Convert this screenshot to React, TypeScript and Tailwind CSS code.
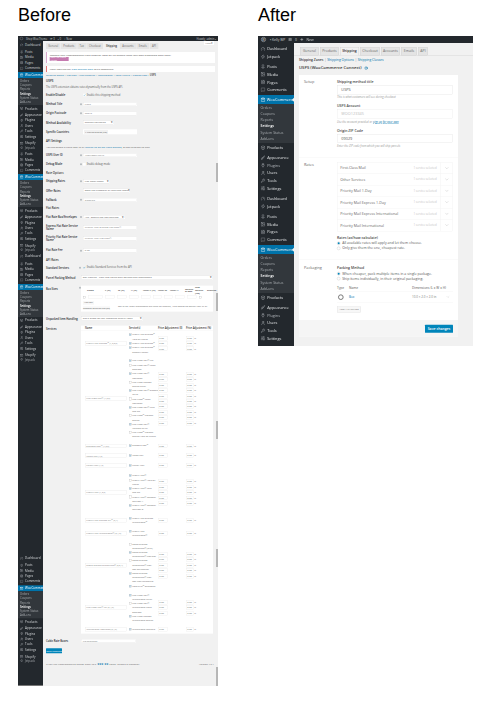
import type { ReactNode } from 'react'
import {
  Box,
  Brush,
  Check,
  ChevronDown,
  FileText,
  Gauge,
  HelpCircle,
  Image,
  MessageSquare,
  MessageSquareText,
  Pin,
  Plug,
  Plus,
  ShoppingBag,
  SlidersHorizontal,
  User,
  Wrench,
  Zap,
} from 'lucide-react'

type IconType = typeof Gauge

// both screenshots are drawn at 3x and scaled down, so small text keeps its real size
const subMenu = ['Orders', 'Coupons', 'Reports', 'Settings', 'System Status', 'Add-ons']

const topItems: [string, IconType][] = [
  ['Posts', Pin],
  ['Media', Image],
  ['Pages', FileText],
  ['Comments', MessageSquare],
]

const lowerItems: [string, IconType][] = [
  ['Appearance', Brush],
  ['Plugins', Plug],
  ['Users', User],
  ['Tools', Wrench],
  ['Settings', SlidersHorizontal],
]

function SmallItem({ label, icon: Icon }: { label: string; icon: IconType }) {
  return (
    <div className="flex h-[16.2px] items-center gap-[5px] pl-[6px] text-[9px] text-[#d5d8da]">
      <Icon size={10} strokeWidth={2.5} className="shrink-0 text-[#a0a5aa]" />
      <span>{label}</span>
    </div>
  )
}

function SmallGroup({ className }: { className?: string }) {
  return (
    <div className={className}>
      {topItems.map(([label, icon]) => (
        <SmallItem key={label} label={label} icon={icon} />
      ))}
      <div className="mt-[3.3px] flex h-[18px] items-center gap-[5px] bg-[#0073aa] pl-[6px] text-[9px] text-white">
        <ShoppingBag size={10} strokeWidth={2.5} className="shrink-0" />
        <span>WooCommerce</span>
      </div>
      <div className="h-[81px] bg-[#32373c] pt-[2.4px]">
        {subMenu.map((s) => (
          <div
            key={s}
            className={`h-[12.9px] pl-[6px] text-[8.4px] leading-[12.9px] ${s === 'Settings' ? 'font-semibold text-white' : 'text-[#a5a9ad]'}`}
          >
            {s}
          </div>
        ))}
      </div>
      <div className="mt-[2.4px]">
        <SmallItem label="Products" icon={Box} />
      </div>
      <div className="mt-[3.3px]">
        {lowerItems.map(([label, icon]) => (
          <SmallItem key={label} label={label} icon={icon} />
        ))}
      </div>
      <div className="mt-[6px] flex h-[12.6px] items-center gap-[5px] pl-[6px] text-[9px] text-[#d5d8da]">
        <ShoppingBag size={10} strokeWidth={2.5} className="shrink-0 text-[#a0a5aa]" />
        Shopify
      </div>
      <div className="flex h-[12.6px] items-center gap-[5px] pl-[6px] text-[9px] text-[#a5a9ad]">
        <Zap size={10} strokeWidth={2.5} className="shrink-0 text-[#a0a5aa]" />
        Jetpack
      </div>
    </div>
  )
}

function BeforeSidebar() {
  return (
    <div className="flex h-[1935px] w-[75px] shrink-0 flex-col border-b-[3px] border-[#777] bg-[#23282d] pt-[3.9px]">
      <SmallItem label="Dashboard" icon={Gauge} />
      <SmallGroup className="mt-[4.8px]" />
      <SmallGroup className="mt-[5.4px]" />
      <div className="mt-[5.4px]">
        <SmallItem label="Dashboard" icon={Gauge} />
      </div>
      <SmallGroup className="mt-[6.6px]" />
      <div className="mt-[582px]">
        <SmallItem label="Dashboard" icon={Gauge} />
      </div>
      <SmallGroup className="mt-[4.8px]" />
    </div>
  )
}

function FormRow({
  label,
  tip,
  className,
  children,
}: {
  label: string
  tip?: boolean
  className: string
  children?: ReactNode
}) {
  return (
    <div className={`flex items-center ${className}`}>
      <div className="w-[102px] shrink-0 pr-[4px] text-[8px] leading-[10.5px] font-semibold text-[#23282d]">{label}</div>
      <div className="flex w-[9px] shrink-0 justify-start">
        {tip && <div className="h-[6px] w-[6px] rounded-full bg-[#b4b9be]" />}
      </div>
      {children}
    </div>
  )
}

function Field({ value, className }: { value?: string; className: string }) {
  return (
    <div className={`flex h-[11px] items-center border border-[#e5e5e5] bg-white pl-[4.5px] text-[7.5px] text-[#777] ${className}`}>
      {value}
    </div>
  )
}

function Select({ value, className }: { value: string; className: string }) {
  return (
    <div className={`flex h-[12px] items-center justify-between border border-[#ddd] bg-white px-[4.5px] text-[7.5px] whitespace-nowrap text-[#555] ${className}`}>
      <span>{value}</span>
      <span className="text-[7.5px] text-[#333]">▾</span>
    </div>
  )
}

type Service = { lines: string[]; on?: boolean }
type ServiceGroup = { name: string; cls: string; services: Service[] }

const s2 = (a: string, b: string, on = true): Service => ({ lines: [a, b], on })
const s1 = (a: string, on = true): Service => ({ lines: [a], on })
const s3 = (a: string, b: string, c: string, on = true): Service => ({ lines: [a, b, c], on })

const groups: ServiceGroup[] = [
  {
    name: 'Priority Mail Express™ (1,2,3,5)',
    cls: 'py-[6.75px]',
    services: [
      s2('Priority Mail Express™', 'Hold for Pickup'),
      s1('Priority Mail Express™'),
      s2('Priority Mail Express™', 'Sunday/Holiday'),
    ],
  },
  {
    name: 'First-Class Mail® (1,2,5)',
    cls: 'py-[6.75px]',
    services: [
      s1('First-Class Mail® Flat'),
      s2('First-Class Mail® Large', 'Envelope', false),
      s2('First-Class Mail®', 'Postcards'),
      s2('First-Class Package', 'Service Retail', false),
      s2('First-Class Mail® Stamped', 'Letter'),
      s2('First-Class™ Large', 'Postcards', false),
      s2('First-Class Mail® Keys', 'and IDs'),
      s2('First-Class™ Package', 'Service', false),
      s2('First-Class Mail®', 'Metered Letter'),
      s2('First-Class™ Package', 'Service Hold for Pickup', false),
    ],
  },
  { name: 'Standard Post™ (1,2,5)', cls: 'py-[7.8px]', services: [s1('Standard Post™')] },
  { name: 'Media Mail (1,5)', cls: 'py-[7.8px]', services: [s1('Media Mail')] },
  { name: 'Library Mail (1,5)', cls: 'py-[7.8px]', services: [s1('Library Mail')] },
  {
    name: 'Priority Mail (1,2,5)',
    cls: 'pt-[9px] pb-[6.75px]',
    services: [
      s1('Priority Mail®'),
      s2('Priority Mail® Hold for', 'Pickup', false),
      s2('Priority Mail® Keys', 'and IDs'),
      s2('Priority Mail® Regional', 'Rate Box A', false),
      s2('Priority Mail® Regional', 'Rate Box B'),
    ],
  },
  {
    name: 'Priority Mail Express Intl™ (2,4)',
    cls: 'py-[6.75px]',
    services: [s2('Priority Mail Express', 'International™')],
  },
  {
    name: 'Priority Mail International® (2,4,5)',
    cls: 'py-[6.75px]',
    services: [s2('Priority Mail', 'International®')],
  },
  {
    name: 'Global Express Guaranteed® (2,3,4)',
    cls: 'py-[6.75px]',
    services: [
      s2('Global Express', 'Guaranteed® (GXG)', false),
      s2('Global Express', 'Guaranteed® Non-Doc'),
      s3('Global Express', 'Guaranteed® Non-', 'Doc Rectangular', false),
      s3('Global Express', 'Guaranteed® Non-', 'Doc Non-rectangular'),
      s1('USPS GXG™ Envelopes'),
    ],
  },
  {
    name: 'First Class Mail® Intl (2,4,5)',
    cls: 'py-[6.75px]',
    services: [
      s2('First-Class Mail®', 'International Letter'),
      s3('First-Class Mail®', 'International Large', 'Envelope', false),
      s2('First-Class Package', 'International Service'),
    ],
  },
  {
    name: 'International Postcards (2,4,5)',
    cls: 'py-[6.75px]',
    services: [s1('International Postcard')],
  },
]

function MiniInput({ suffix }: { suffix?: boolean }) {
  return (
    <div className="flex h-[13.5px] items-center gap-[2.4px]">
      <div className={`flex h-[12.6px] items-center border border-[#e8e8e8] bg-white pl-[3px] text-[7px] text-[#777] ${suffix ? 'w-[22px]' : 'w-[29px]'}`}>
        0.00
      </div>
      {suffix && <span className="text-[7px] text-[#555]">%</span>}
    </div>
  )
}

function ServicesTable() {
  return (
    <div className="w-[396px] bg-white">
      <div className="grid h-[15px] grid-cols-[144px_87px_84px_81px] items-center border-b border-[#eee] text-[7.5px] font-semibold whitespace-nowrap text-[#333]">
        <span className="pl-[12px]">Name</span>
        <span>Service(s)</span>
        <span>Price Adjustment ($)</span>
        <span>Price Adjustment (%)</span>
      </div>
      {groups.map((g) => (
        <div key={g.name} className={`grid grid-cols-[144px_87px_84px_81px] items-center ${g.cls}`}>
          <div className="pl-[12px]">
            <div className="flex h-[12px] w-[126px] items-center border border-[#e5e5e5] pl-[3px] text-[6.6px] whitespace-nowrap text-[#777]">
              {g.name}
            </div>
          </div>
          <div>
            {g.services.map((s) => (
              <div key={s.lines.join()} className="flex min-h-[13.8px] gap-[2.4px] text-[6.6px] leading-[12.6px] text-[#666]">
                <div className={`mt-[2.7px] flex h-[7.2px] w-[7.2px] shrink-0 items-center justify-center border border-[#bbb] ${s.on ? 'bg-[#d6e8f5]' : 'bg-white'}`}>
                  {s.on && <Check size={6.6} strokeWidth={4} className="text-[#1e8cbe]" />}
                </div>
                <div className="whitespace-nowrap">
                  {s.lines.map((l) => (
                    <div key={l}>{l}</div>
                  ))}
                </div>
              </div>
            ))}
          </div>
          <div className="flex flex-col gap-[2.7px]">
            {g.services.map((s) => (
              <MiniInput key={s.lines.join()} />
            ))}
          </div>
          <div className="flex flex-col gap-[2.7px]">
            {g.services.map((s) => (
              <MiniInput key={s.lines.join()} suffix />
            ))}
          </div>
        </div>
      ))}
    </div>
  )
}

function BoxTable() {
  const cols: [string, string][] = [
    ['Name', 'w-[54px]'],
    ['L (in)', 'w-[39px]'],
    ['W (in)', 'w-[39px]'],
    ['H (in)', 'w-[36px]'],
    ['Inner L (in)', 'w-[45px]'],
    ['Inner W', 'w-[36px]'],
    ['Inner H', 'w-[45px]'],
    ['Weight of Box', 'w-[30px]'],
    ['Max Weight (lbs)', 'w-[36px]'],
    ['Enabled', 'w-[30px]'],
  ]
  return (
    <div className="h-[78px] w-[396px] bg-white">
      <div className="flex h-[27px] items-center pl-[18px] text-[7.2px] leading-[8.5px] font-semibold text-[#444]">
        {cols.map(([c, w]) => (
          <div key={c} className={`shrink-0 pr-[2px] ${w}`}>
            {c}
          </div>
        ))}
      </div>
      <div className="flex h-[15px] items-center gap-[9px] pl-[6px]">
        <div className="h-[7.2px] w-[7.2px] border border-[#bbb]" />
        <div className="h-[11px] w-[42px] border border-[#e8e8e8]" />
        <div className="h-[11px] w-[27px] border border-[#e8e8e8]" />
        <div className="h-[11px] w-[27px] border border-[#e8e8e8]" />
        <div className="h-[11px] w-[27px] border border-[#e8e8e8]" />
        <div className="h-[11px] w-[27px] border border-[#e8e8e8]" />
        <div className="h-[11px] w-[24px] border border-[#e8e8e8]" />
        <div className="h-[11px] w-[24px] border border-[#e8e8e8]" />
        <div className="h-[11px] w-[27px] border border-[#e8e8e8]" />
        <div className="h-[11px] w-[27px] border border-[#e8e8e8]" />
        <div className="h-[7.2px] w-[7.2px] border border-[#bbb]" />
      </div>
      <div className="mt-[4.5px] flex gap-[24px] pl-[6px]">
        <div className="flex flex-col gap-[4.5px]">
          <div className="flex h-[11px] w-[33px] items-center justify-center bg-[#f7f7f7] text-[7px] text-[#555]">Add box</div>
          <div className="flex h-[11px] w-[81px] items-center justify-center bg-[#f7f7f7] text-[7px] whitespace-nowrap text-[#555]">Remove selected box(es)</div>
        </div>
        <div className="mt-[11px] text-[7px] whitespace-nowrap text-[#666]">
          Box sizes: inner dimensions are used for packing, zero means no weight limit at all.
        </div>
      </div>
    </div>
  )
}

function BeforeMain() {
  const tabs = ['General', 'Products', 'Tax', 'Checkout', 'Shipping', 'Accounts', 'Emails', 'API']
  return (
    <div className="relative w-[525px] bg-[#f1f1f1] pl-[9px]">
      <div className="absolute top-0 right-[12px] flex h-[12px] w-[30px] items-center justify-center bg-white text-[7.5px] text-[#666]">Help ▾</div>
      <div className="flex h-[30px] items-center gap-[1.5px] pr-[9px]">
        {tabs.map((t) => (
          <div
            key={t}
            className={`flex h-[18px] items-center px-[7px] text-[8px] ${t === 'Shipping' ? 'bg-[#f1f1f1] font-semibold text-[#333]' : 'bg-[#e4e4e4] text-[#666]'}`}
          >
            {t}
          </div>
        ))}
      </div>
      <div className="mt-[3px] mr-[9px] h-[33px] border-l-2 border-[#c77fb5] bg-white pt-[3px] pl-[9px] text-[7.5px] text-[#444]">
        <div className="h-[12px] whitespace-nowrap">Connect your WooCommerce USPS account: rates will be fetched using your own credentials once ready.</div>
        <div className="flex h-[12px] w-[57px] items-center justify-center bg-[#c57ab0] text-[7px] text-white">Apply for USPS Access</div>
      </div>
      <div className="mt-[9px] mr-[9px] flex h-[18px] items-center border-l-2 border-[#dc3232] bg-white pl-[9px] text-[7.5px] text-[#444]">
        USPS requires the <span className="mx-[3px] text-[#0073aa]">Rate Settings page</span> to be configured.
      </div>
      <div className="mt-[3px] flex h-[12px] items-center gap-[2px] text-[7.5px] whitespace-nowrap text-[#0073aa]">
        Shipping Zones | Flat Rate | Free Shipping | International | Local Pickup | Canada Post |
        <b className="font-semibold text-[#333]">USPS</b>
      </div>
      <div className="mt-[4.5px] flex h-[15px] items-center text-[9px] font-semibold text-[#23282d]">USPS</div>
      <div className="mt-[4.5px] h-[12px] text-[7.6px] leading-[12px] whitespace-nowrap text-[#555]">
        The USPS extension obtains rates dynamically from the USPS API.
      </div>
      <div className="mt-[4.5px]">
        <FormRow label="Enable/Disable" className="h-[27.6px]">
          <div className="flex items-center gap-[3px] text-[7.6px] text-[#555]">
            <div className="flex h-[8px] w-[8px] items-center justify-center bg-white">
              <Check size={7} strokeWidth={4} className="text-[#1e8cbe]" />
            </div>
            Enable this shipping method
          </div>
        </FormRow>
        <FormRow label="Method Title" tip className="h-[27.6px]"><Field value="USPS" className="w-[162px]" /></FormRow>
        <FormRow label="Origin Postcode" tip className="h-[27.6px]"><Field value="90210" className="w-[162px]" /></FormRow>
        <FormRow label="Method Availability" className="h-[27.6px]"><Select value="Specific Countries" className="w-[93px]" /></FormRow>
        <FormRow label="Specific Countries" className="h-[27.6px]">
          <div className="flex h-[15px] w-[162px] items-center bg-white pl-[3px]">
            <div className="bg-[#f1f1f1] px-[3px] text-[7.2px] text-[#555]">× United States (US)</div>
          </div>
        </FormRow>
      </div>
      <div className="mt-[6.3px] flex h-[18px] items-center text-[8.4px] font-semibold text-[#23282d]">API Settings</div>
      <div className="h-[12px] text-[7.5px] leading-[12px] whitespace-nowrap text-[#555]">
        You can obtain a USPS user ID by <span className="text-[#0073aa]">signing up on the USPS website</span>, or ask us to set up free.
      </div>
      <div className="mt-[6px]">
        <FormRow label="USPS User ID" tip className="h-[27.6px]"><Field value="150WOOTH5516" className="w-[162px]" /></FormRow>
        <FormRow label="Debug Mode" tip className="h-[27.6px]">
          <div className="flex items-center gap-[3px] text-[7.6px] text-[#555]">
            <div className="h-[8px] w-[8px] bg-white" />
            Enable debug mode
          </div>
        </FormRow>
      </div>
      <div className="flex h-[24px] items-center text-[8.4px] font-semibold text-[#333]">Rate Options</div>
      <FormRow label="Shipping Rates" tip className="h-[27px]"><Select value="Use Retail Rates" className="w-[81px]" /></FormRow>
      <FormRow label="Offer Rates" className="h-[27.6px]"><Select value="Offer the customer all returned rates" className="w-[141px]" /></FormRow>
      <FormRow label="Fallback" tip className="h-[27.6px]"><Field value="Disabled" className="w-[162px]" /></FormRow>
      <div className="flex h-[24px] items-center text-[8.4px] font-semibold text-[#333]">Flat Rates</div>
      <FormRow label="Flat Rate Box/Envelopes" tip className="h-[27.6px]"><Select value="Yes - Enable flat rate services" className="w-[126px]" /></FormRow>
      <FormRow label="Express Flat Rate Service Name" className="h-[36px]"><Field value="Priority Mail Express Flat Rate®" className="w-[162px]" /></FormRow>
      <FormRow label="Priority Flat Rate Service Name" className="h-[30px]"><Field value="Priority Mail Flat Rate®" className="w-[162px]" /></FormRow>
      <FormRow label="Flat Rate Fee" tip className="h-[42px]"><Field value="0.00" className="w-[162px]" /></FormRow>
      <div className="flex h-[15px] items-center text-[8.4px] font-semibold text-[#333]">API Rates</div>
      <div className="flex h-[30px] items-center">
        <div className="w-[99px] shrink-0 text-[8px] font-semibold text-[#23282d]">Standard Services</div>
        <div className="h-[6px] w-[6px] rounded-full bg-[#b4b9be]" />
        <div className="ml-[6px] flex items-center gap-[3px] text-[7.6px] text-[#555]">
          <Check size={8} strokeWidth={4} className="text-[#1e8cbe]" />
          Enable Standard Services from the API
        </div>
      </div>
      <div className="flex h-[30px] items-center">
        <div className="w-[105px] shrink-0 text-[8px] font-semibold text-[#23282d]">Parcel Packing Method</div>
        <Select value="Box Packing - Pack into boxes with weights and dimensions" className="w-[396px]" />
      </div>
      <div className="mt-[9px] flex">
        <div className="w-[99px] shrink-0 pt-[3px] text-[8px] font-semibold text-[#23282d]">Box Sizes</div>
        <div className="mt-[3px] h-[6px] w-[6px] rounded-full bg-[#b4b9be]" />
        <BoxTable />
      </div>
      <div className="mt-[6px] flex h-[30px] items-center">
        <div className="w-[105px] shrink-0 text-[8px] font-semibold text-[#23282d]">Unpacked Item Handling</div>
        <Select value="Get a quote for the unpacked item by itself" className="w-[186px]" />
      </div>
      <div className="mt-[6px] flex">
        <div className="w-[105px] shrink-0 pt-[3px] text-[8px] font-semibold text-[#23282d]">Services</div>
        <ServicesTable />
      </div>
      <div className="mt-[6px] flex h-[30px] items-center">
        <div className="w-[105px] shrink-0 text-[8px] font-semibold text-[#23282d]">Cubic Rate Boxes</div>
        <Field value="No selection" className="w-[165px]" />
      </div>
      <div className="mt-[7.5px] flex h-[15px] w-[48px] items-center justify-center rounded-[1.5px] bg-[#0085ba] text-[7.5px] text-white">
        Save changes
      </div>
      <div className="mt-[27px] flex h-[12px] items-center justify-between pr-[12px] text-[7.5px] text-[#666]">
        <span>If you like WooCommerce please leave us a <span className="text-[#0073aa]">★★★★★</span> rating. Thanks in advance!</span>
        <span>Version 4.5.1</span>
      </div>
    </div>
  )
}

function BeforeShot() {
  return (
    <div className="h-[650px] w-[200px] overflow-hidden">
      <div className="relative h-[1950px] w-[600px] origin-top-left scale-[0.33333]">
        <div className="flex h-[15px] items-center gap-[9px] bg-[#23282d] px-[6px] text-[8px] text-[#c8cbce]">
          <div className="h-[9px] w-[9px] rounded-full border border-[#a0a5aa]" />
          <span>Shop WooTheme</span>
          <span>⟳ 3</span>
          <span>▪ 0</span>
          <span>+ New</span>
          <span className="ml-auto">Howdy, admin ▪</span>
        </div>
        <div className="flex">
          <BeforeSidebar />
          <BeforeMain />
        </div>
        <div className="absolute top-[381px] right-[1.5px] h-[57px] w-[3.6px] bg-[#9a9a9a]" />
        <div className="absolute top-[771px] right-[1.5px] h-[54px] w-[3.6px] bg-[#9a9a9a]" />
        <div className="absolute top-[1155px] right-[1.5px] h-[54px] w-[3.6px] bg-[#9a9a9a]" />
        <div className="absolute top-[1539px] right-[1.5px] h-[54px] w-[3.6px] bg-[#9a9a9a]" />
        <div className="absolute top-[1893px] right-[1.5px] h-[57px] w-[3.6px] bg-[#9a9a9a]" />
      </div>
    </div>
  )
}

function BigItem({ label, icon: Icon, light }: { label: string; icon: IconType; light?: boolean }) {
  return (
    <div className={`flex h-[23.1px] items-center gap-[6px] pl-[7.5px] text-[11.5px] ${light ? 'text-[#b4b9be]' : 'text-[#e4e6e8]'}`}>
      <Icon size={14} strokeWidth={2.3} className="shrink-0 text-[#a0a5aa]" />
      <span>{label}</span>
    </div>
  )
}

function BigGroup({ className }: { className: string }) {
  return (
    <div className={className}>
      {topItems.map(([label, icon]) => (
        <BigItem key={label} label={label} icon={icon} />
      ))}
      <div className="relative mt-[4.5px] flex h-[27px] items-center gap-[5px] bg-[#0073aa] pl-[7.5px] text-[11.5px] whitespace-nowrap text-white">
        <ShoppingBag size={14} strokeWidth={2.3} className="shrink-0" />
        <span>WooCommerce</span>
        <div className="absolute top-[7.5px] right-0 h-0 w-0 border-y-[6px] border-r-[6px] border-y-transparent border-r-[#f1f1f1]" />
      </div>
      <div className="h-[117px] bg-[#32373c] pt-[1.2px]">
        {subMenu.map((s) => (
          <div
            key={s}
            className={`h-[18.6px] pl-[7.5px] text-[10.5px] leading-[18.6px] ${s === 'Settings' ? 'font-semibold text-white' : 'text-[#a7abaf]'}`}
          >
            {s}
          </div>
        ))}
      </div>
      <div className="mt-[1.8px]">
        <BigItem label="Products" icon={Box} />
      </div>
      <div className="mt-[6.9px]">
        {lowerItems.map(([label, icon]) => (
          <BigItem key={label} label={label} icon={icon} light={label === 'Plugins'} />
        ))}
      </div>
    </div>
  )
}

function AfterSidebar() {
  return (
    <div className="h-[909px] w-[108px] shrink-0 overflow-hidden bg-[#23282d] pt-[6px]">
      <BigItem label="Dashboard" icon={Gauge} />
      <BigItem label="Jetpack" icon={Zap} />
      <BigGroup className="mt-[7.35px]" />
      <div className="mt-[7.5px]">
        <BigItem label="Dashboard" icon={Gauge} />
        <BigItem label="Jetpack" icon={Zap} />
      </div>
      <BigGroup className="mt-[7.95px]" />
    </div>
  )
}

function Help({ children, className }: { children: ReactNode; className: string }) {
  return <div className={`h-[12px] text-[8.5px] leading-[12px] whitespace-nowrap text-[#999] italic ${className}`}>{children}</div>
}

function BigLabel({ children, className }: { children: ReactNode; className: string }) {
  return <div className={`h-[12px] text-[10.5px] leading-[12px] font-semibold text-[#444] ${className}`}>{children}</div>
}

function Radio({ label, on }: { label: string; on?: boolean }) {
  return (
    <div className="flex h-[15px] items-center gap-[6px] text-[10.5px] whitespace-nowrap text-[#555]">
      <div className="flex h-[9.6px] w-[9.6px] items-center justify-center rounded-full border border-[#bbb] bg-white">
        {on && <div className="h-[6px] w-[6px] rounded-full bg-[#0085ba]" />}
      </div>
      {label}
    </div>
  )
}

const rates = [
  'First-Class Mail',
  'Other Services',
  'Priority Mail 1-Day',
  'Priority Mail Express 1-Day',
  'Priority Mail Express International',
  'Priority Mail International',
]

function AfterCard() {
  return (
    <div className="mt-[12px] w-[477px] bg-white text-[#555]">
      <div className="flex border-b border-[#eee] pt-[15px] pb-[27px]">
        <div className="w-[114px] shrink-0 pl-[15px] text-[11.5px] leading-[12px] text-[#666]">Setup</div>
        <div className="w-[348px]">
          <BigLabel className="">Shipping method title</BigLabel>
          <div className="mt-[3px] flex h-[30px] items-center border border-[#ddd] pl-[12px] text-[11.5px] text-[#555]">USPS</div>
          <Help className="mt-[1.5px]">This is what customers will see during checkout</Help>
          <BigLabel className="mt-[13.5px]">USPS Account</BigLabel>
          <div className="mt-[3px] flex h-[30px] items-center border border-[#e6e6e6] pl-[12px] text-[11.5px] text-[#bbb]">WOO123345</div>
          <Help className="mt-[3px]">Use the account provided or <span className="text-[#0073aa] underline">sign up for your own</span></Help>
          <BigLabel className="mt-[13.5px]">Origin ZIP Code</BigLabel>
          <div className="mt-[4.5px] flex h-[27px] items-center border border-[#ddd] pl-[12px] text-[11.5px] text-[#555]">09029</div>
          <Help className="mt-[3px]">Enter the ZIP code from which you will ship parcels</Help>
        </div>
      </div>
      <div className="flex border-b border-[#eee] pt-[15px] pb-[25.5px]">
        <div className="w-[114px] shrink-0 pt-[1.5px] pl-[15px] text-[11.5px] leading-[12px] text-[#666]">Rates</div>
        <div className="w-[348px]">
          <div className="border border-[#eee]">
            {rates.map((r) => (
              <div key={r} className="flex h-[34.2px] items-center border-b border-[#eee] pl-[9px] text-[11px] text-[#666] last:border-b-0">
                <span className="whitespace-nowrap">{r}</span>
                <span className="mr-[12px] ml-auto text-[8.5px] text-[#c4c4c4]">1 service selected</span>
                <div className="flex h-full w-[36px] items-center justify-center border-l border-[#eee]">
                  <ChevronDown size={15} strokeWidth={1.5} className="text-[#aaa]" />
                </div>
              </div>
            ))}
          </div>
          <BigLabel className="mt-[13.5px]">Rates (as/how calculate)</BigLabel>
          <div className="mt-[3px]">
            <Radio on label="All available rates will apply and let them choose." />
            <Radio label="Only give them the one, cheapest rate." />
          </div>
        </div>
      </div>
      <div className="flex pt-[18px] pb-[24px]">
        <div className="w-[114px] shrink-0 pl-[15px] text-[11.5px] leading-[12px] text-[#666]">Packaging</div>
        <div className="w-[348px]">
          <BigLabel className="">Packing Method</BigLabel>
          <div className="mt-[4.5px]">
            <Radio on label="When cheaper, pack multiple items in a single package." />
            <Radio label="Ship items individually, in their original packaging." />
          </div>
          <div className="mt-[13.5px] flex h-[15px] items-center text-[9.6px] text-[#555]">
            <span className="w-[36px]">Type</span>
            <span className="w-[189px]">Name</span>
            <span>Dimensions (L x W x H)</span>
          </div>
          <div className="mt-[3px] flex h-[33px] items-center border-y border-[#eee] text-[9px]">
            <div className="flex w-[36px] pl-[3px]">
              <div className="flex h-[16.5px] w-[16.5px] items-center justify-center rounded-full border-[3px] border-[#777]">
                <div className="h-[6px] w-[6px] rounded-full bg-white" />
              </div>
            </div>
            <span className="w-[189px] text-[#0073aa]">Box</span>
            <span className="text-[#777]">10.0 × 2.0 × 2.0 in</span>
            <ChevronDown size={12} strokeWidth={1.5} className="mr-[9px] ml-auto text-[#aaa]" />
          </div>
          <div className="mt-[12px] flex h-[18px] w-[72px] items-center justify-center border border-[#ddd] bg-[#f7f7f7] text-[7.5px] whitespace-nowrap text-[#666]">
            ADD A PACKAGE
          </div>
        </div>
      </div>
      <div className="flex h-[48px] items-center justify-end border-t border-[#e5e5e5] bg-[#f5f5f5] pr-[15px]">
        <div className="flex h-[24px] w-[84px] items-center justify-center rounded-[1.5px] bg-[#0085ba] text-[10.5px] font-semibold text-white">
          Save changes
        </div>
      </div>
    </div>
  )
}

function AfterMain() {
  const tabs: [string, string][] = [
    ['General', 'w-[57px]'],
    ['Products', 'w-[57px]'],
    ['Shipping', 'w-[57px]'],
    ['Checkout', 'w-[60px]'],
    ['Accounts', 'w-[57px]'],
    ['Emails', 'w-[48px]'],
    ['API', 'w-[30px]'],
  ]
  return (
    <div className="h-[909px] w-[537px] bg-[#f1f1f1] pt-[12px]">
      <div className="flex h-[25px] gap-[3px] border-b border-[#ccc] pl-[18px]">
        {tabs.map(([t, w]) => (
          <div
            key={t}
            className={`flex h-[25px] items-center justify-center border border-[#ccc] text-[10.5px] ${w} ${t === 'Shipping' ? 'border-b-0 bg-[#f1f1f1] font-semibold text-[#333]' : 'bg-[#e4e4e4] text-[#666]'}`}
          >
            {t}
          </div>
        ))}
      </div>
      <div className="mt-[6.3px] ml-[15px] flex h-[12px] items-center gap-[3px] text-[10px] whitespace-nowrap text-[#0073aa]">
        <b className="font-semibold text-[#333]">Shipping Zones</b>
        <span className="text-[#999]">|</span> Shipping Options
        <span className="text-[#999]">|</span> Shipping Classes
      </div>
      <div className="mt-[10.5px] ml-[15px] flex h-[18px] items-center gap-[9px] text-[12.5px] font-semibold whitespace-nowrap text-[#333]">
        USPS (WooCommerce Connect)
        <HelpCircle size={10.5} strokeWidth={3} className="text-[#0073aa]" />
      </div>
      <div className="ml-[15px]">
        <AfterCard />
      </div>
    </div>
  )
}

function AfterShot() {
  return (
    <div className="h-[310px] w-[215px] overflow-hidden">
      <div className="h-[930px] w-[645px] origin-top-left scale-[0.33333]">
        <div className="flex h-[21px] items-center gap-[9px] bg-[#23282d] pl-[9px] text-[10px] text-[#d5d8da]">
          <div className="mr-[3px] flex h-[15px] w-[15px] items-center justify-center rounded-full border-2 border-[#a0a5aa] text-[9px]">W</div>
          <span>▪ Kelly WP</span>
          <MessageSquareText size={11} strokeWidth={2.5} />
          <span>0</span>
          <Plus size={11} strokeWidth={3} />
          <span>New</span>
        </div>
        <div className="flex">
          <AfterSidebar />
          <AfterMain />
        </div>
      </div>
    </div>
  )
}

export default function App() {
  return (
    <div className="flex h-[702px] w-[496px] overflow-hidden bg-white pl-[18px] font-['Open_Sans',sans-serif]">
      <div className="w-[200px]">
        <div className="flex h-[36px] items-start pt-[5px] font-['Liberation_Sans',sans-serif] text-[18px] leading-[20px] text-black">Before</div>
        <BeforeShot />
      </div>
      <div className="ml-[40px]">
        <div className="flex h-[36px] items-start pt-[5px] font-['Liberation_Sans',sans-serif] text-[18px] leading-[20px] text-black">After</div>
        <AfterShot />
      </div>
    </div>
  )
}
